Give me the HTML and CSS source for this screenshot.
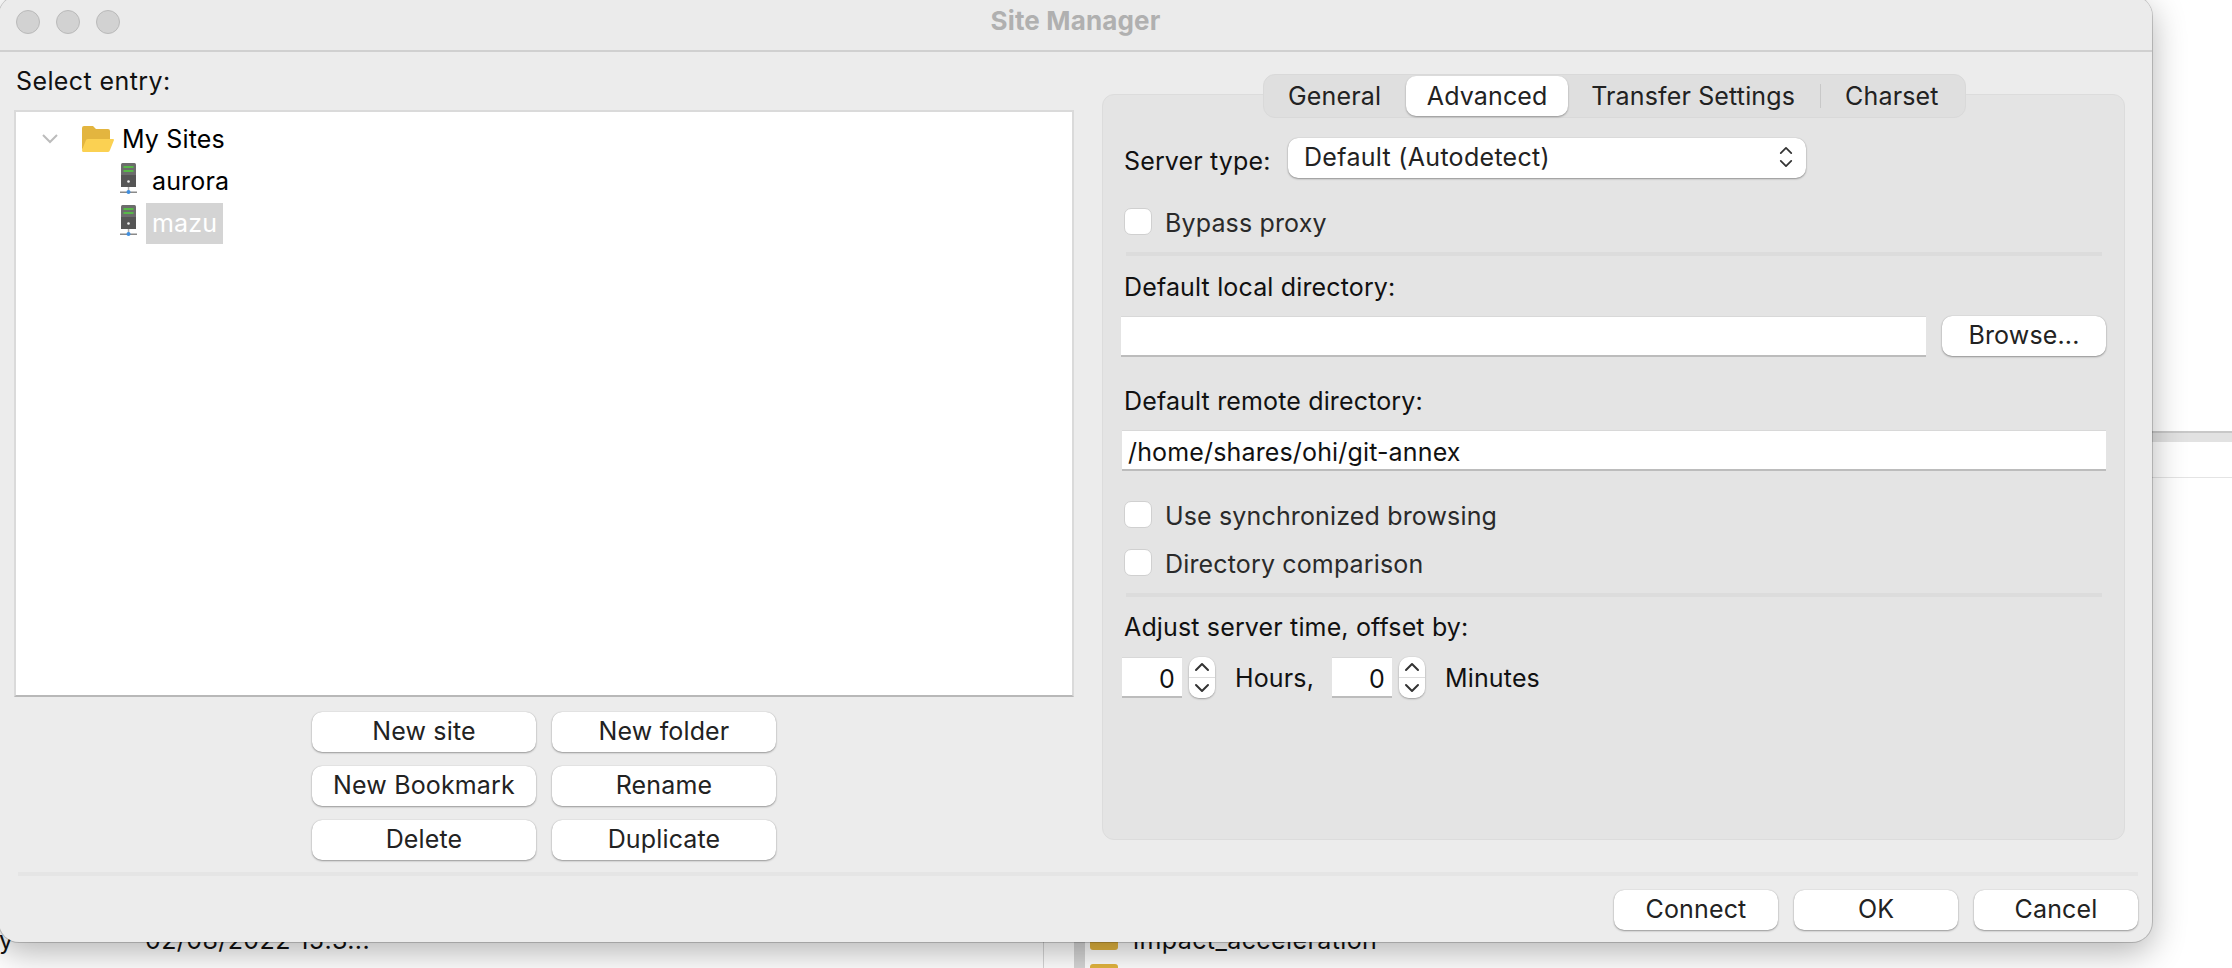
FILE: index.html
```html
<!DOCTYPE html>
<html lang="en">
<head>
    <meta charset="UTF-8">
    <meta name="viewport" content="width=device-width, initial-scale=1.0">
    <title>Site Manager</title>
    <link rel="stylesheet" href="styles.css">
</head>
<body>
    <svg class="defs" width="0" height="0">
        <symbol id="server" viewBox="0 0 18 36">
            <rect x="1" y="0" width="15" height="24" rx="1.5" fill="#6c6c6c"/>
            <rect x="1" y="12" width="15" height="12" fill="#555"/>
            <rect x="3.5" y="3" width="10" height="2" fill="#57b848"/>
            <rect x="3.5" y="7" width="10" height="2" fill="#57b848"/>
            <circle cx="8.5" cy="18.500" r="1.300" fill="#f2f2f2"/>
            <rect x="7.800" y="24" width="1.500" height="5" fill="#aaa"/>
            <rect x="0" y="28.500" width="17" height="1.500" fill="#8a8a8a"/>
            <circle cx="8.500" cy="29" r="2" fill="#3f8fe0"/>
        </symbol>
        <symbol id="up" viewBox="0 0 16 10">
            <path d="M2 8 L8 2 L14 8" fill="none" stroke="#333" stroke-width="2" stroke-linecap="round" stroke-linejoin="round"/>
        </symbol>
        <symbol id="down" viewBox="0 0 16 10">
            <path d="M2 2 L8 8 L14 2" fill="none" stroke="#333" stroke-width="2" stroke-linecap="round" stroke-linejoin="round"/>
        </symbol>
    </svg>

    <!-- the file manager window behind the dialog -->
    <div class="behind">
        <div class="behind-band"></div>
        <div class="behind-line"></div>
        <span class="behind-text behind-type">y</span>
        <span class="behind-text behind-date">02/08/2022 15:3...</span>
        <div class="behind-rule behind-rule-a"></div>
        <div class="behind-rule behind-rule-b"></div>
        <div class="behind-folder behind-folder-a"></div>
        <div class="behind-folder behind-folder-b"></div>
        <span class="behind-text behind-name">impact_acceleration</span>
    </div>

    <div class="window">
        <div class="titlebar">
            <div class="lights">
                <span class="light"></span>
                <span class="light"></span>
                <span class="light"></span>
            </div>
            <div class="title">Site Manager</div>
        </div>

        <div class="main">
            <div class="sites">
                <div class="label sites-label">Select entry:</div>
                <div class="tree">
                    <div class="tree-row tree-root">
                        <svg class="chevron" viewBox="0 0 16 10" width="16" height="10">
                            <path d="M1 1 L8 8 L15 1" fill="none" stroke="#bcbcbc" stroke-width="2"/>
                        </svg>
                        <svg class="folder" viewBox="0 0 32 26" width="32" height="26">
                            <path d="M0 2 Q0 0 2 0 H11 L14 3 H26 Q28 3 28 5 V24 H2 Q0 24 0 22 Z" fill="#e3b53f"/>
                            <path d="M1 26 Q0 26 0 24 L4 14 Q4.500 13 6 13 H31 Q32 13 32 14 L28 24 Q27.500 26 26 26 Z" fill="#fbd152"/>
                        </svg>
                        <span class="tree-text">My Sites</span>
                    </div>
                    <div class="tree-row tree-site">
                        <svg class="server"><use href="#server"/></svg>
                        <span class="tree-text">aurora</span>
                    </div>
                    <div class="tree-row tree-site">
                        <svg class="server"><use href="#server"/></svg>
                        <span class="tree-text is-selected">mazu</span>
                    </div>
                </div>
                <div class="site-buttons">
                    <button class="btn">New site</button>
                    <button class="btn">New folder</button>
                    <button class="btn">New Bookmark</button>
                    <button class="btn">Rename</button>
                    <button class="btn">Delete</button>
                    <button class="btn">Duplicate</button>
                </div>
            </div>

            <div class="settings">
                <div class="tabs">
                    <span class="tab tab-general">General</span>
                    <span class="tab tab-active">Advanced</span>
                    <span class="tab tab-transfer">Transfer Settings</span>
                    <span class="tab-sep"></span>
                    <span class="tab tab-charset">Charset</span>
                </div>

                <div class="server-row">
                    <span class="label server-label">Server type:</span>
                    <div class="select">
                        <span>Default (Autodetect)</span>
                        <span class="select-arrows">
                            <svg width="14" height="9"><use href="#up"/></svg>
                            <svg width="14" height="9"><use href="#down"/></svg>
                        </span>
                    </div>
                </div>

                <label class="check check-bypass"><input type="checkbox"><span>Bypass proxy</span></label>
                <div class="sep"></div>

                <div class="label field-label">Default local directory:</div>
                <div class="input-row">
                    <input class="input input-local" type="text" value="">
                    <button class="btn btn-browse">Browse...</button>
                </div>

                <div class="label field-label field-remote">Default remote directory:</div>
                <input class="input input-remote" type="text" value="/home/shares/ohi/git-annex">

                <label class="check check-sync"><input type="checkbox"><span>Use synchronized browsing</span></label>
                <label class="check check-compare"><input type="checkbox"><span>Directory comparison</span></label>
                <div class="sep"></div>

                <div class="label field-label field-time">Adjust server time, offset by:</div>
                <div class="time-row">
                    <input class="input input-num" type="text" value="0">
                    <div class="spin">
                        <svg width="16" height="10"><use href="#up"/></svg>
                        <svg width="16" height="10"><use href="#down"/></svg>
                    </div>
                    <span class="label time-hours">Hours,</span>
                    <input class="input input-num" type="text" value="0">
                    <div class="spin">
                        <svg width="16" height="10"><use href="#up"/></svg>
                        <svg width="16" height="10"><use href="#down"/></svg>
                    </div>
                    <span class="label time-minutes">Minutes</span>
                </div>
            </div>
        </div>

        <div class="footer">
            <div class="footer-sep"></div>
            <div class="footer-buttons">
                <button class="btn">Connect</button>
                <button class="btn">OK</button>
                <button class="btn">Cancel</button>
            </div>
        </div>
    </div>
</body>
</html>
```

FILE: styles.css
```css
* {
    box-sizing: border-box;
}

html, body {
    height: 100%;
}

body {
    margin: 0;
    background-color: #fff;
    font-family: 'Inter', 'Liberation Sans', sans-serif;
    font-size: 25px;
    letter-spacing: 0.15px;
    line-height: 30px;
    color: #111;
    overflow: hidden;
}

.defs {
    position: absolute;
}

/* window behind */
.behind-band {
    position: absolute;
    left: 2100px;
    right: 0;
    top: 431px;
    height: 11px;
    background-color: #e2e2e2;
    border-top: 2px solid #c8c8c8;
}

.behind-line {
    position: absolute;
    left: 2100px;
    right: 0;
    top: 477px;
    height: 1px;
    background-color: #e4e4e4;
}

.behind-text {
    position: absolute;
    top: 925px;
    color: #111;
    letter-spacing: 0.4px;
    white-space: nowrap;
}

.behind-type {
    left: -1px;
}

.behind-date {
    left: 145px;
}

.behind-name {
    left: 1133px;
}

.behind-rule {
    position: absolute;
    top: 930px;
    bottom: 0;
    background-color: #d6d6d6;
}

.behind-rule-a {
    left: 1043px;
    width: 1px;
}

.behind-rule-b {
    left: 1074px;
    width: 11px;
}

.behind-folder {
    position: absolute;
    left: 1090px;
    width: 28px;
    height: 20px;
    background-color: #e3b53f;
    border-radius: 3px;
}

.behind-folder-a {
    top: 930px;
}

.behind-folder-b {
    top: 964px;
}

/* dialog */
.window {
    position: absolute;
    left: -1px;
    top: -4px;
    width: 2153px;
    height: 946px;
    background-color: #ececec;
    border-radius: 20px;
    box-shadow: 0 0 0 1px rgba(0, 0, 0, 0.18), 0 10px 34px rgba(0, 0, 0, 0.3);
}

.titlebar {
    position: relative;
    height: 56px;
    display: flex;
    align-items: center;
    justify-content: center;
    padding-top: 4px;
    background-color: #ebebeb;
    border-bottom: 2px solid #d0d0d0;
    border-radius: 20px 20px 0 0;
}

.lights {
    position: absolute;
    left: 17px;
    top: 14px;
    display: flex;
    gap: 16px;
}

.light {
    width: 24px;
    height: 24px;
    border-radius: 50%;
    background-color: #d2d2d2;
    border: 1px solid #bababa;
}

.title {
    font-size: 26px;
    font-weight: 700;
    color: #b0b0b0;
    margin-top: -8px;
}

.main {
    display: flex;
    gap: 28px;
    padding-left: 15px;
}

.label {
    color: #111;
}

/* left column */
.sites {
    width: 1060px;
    padding-top: 14px;
}

.sites-label {
    margin-left: 2px;
    margin-bottom: 14px;
    letter-spacing: 0.4px;
}

.tree {
    height: 587px;
    padding-top: 6px;
    background-color: #fff;
    border: 2px solid #dadada;
    border-bottom-color: #b8b8b8;
}

.tree-row {
    display: flex;
    align-items: center;
    height: 42px;
    color: #000;
}

.tree-root {
    padding-left: 26px;
}

.tree-site {
    padding-left: 104px;
}

.chevron {
    margin-right: 24px;
}

.folder {
    margin-right: 2px;
}

.server {
    width: 18px;
    height: 36px;
    margin-right: 8px;
}

.tree-text {
    padding: 0 6px;
    line-height: 41px;
}

.is-selected {
    background-color: #d4d4d4;
    color: #fff;
}

.site-buttons {
    display: grid;
    grid-template-columns: 224px 224px;
    justify-content: center;
    gap: 14px 16px;
    margin-top: 15px;
}

.btn {
    height: 40px;
    padding: 0 0 2px;
    border: none;
    border-radius: 10px;
    background-color: #fff;
    font: inherit;
    letter-spacing: inherit;
    color: #222;
    box-shadow: 0 1px 2px rgba(0, 0, 0, 0.35), 0 0 1px rgba(0, 0, 0, 0.25);
}

/* right column */
.settings {
    position: relative;
    width: 1023px;
    height: 746px;
    margin-top: 42px;
    padding: 0 22px 0 21px;
    background-color: #e4e4e4;
    border: 1px solid #dcdcdc;
    border-radius: 12px;
}

.tabs {
    display: flex;
    align-items: center;
    width: 703px;
    height: 44px;
    margin: -21px 0 0 139px;
    background-color: #dfdfdf;
    border: 1px solid #d9d9d9;
    border-radius: 12px;
    padding: 1px;
    color: #222;
}

.tab {
    white-space: nowrap;
    padding-bottom: 1px;
}

.tab-general {
    margin-left: 23px;
}

.tab-active {
    display: flex;
    align-items: center;
    justify-content: center;
    width: 162px;
    height: 40px;
    margin-left: 25px;
    background-color: #fff;
    border-radius: 10px;
    box-shadow: 0 1px 2px rgba(0, 0, 0, 0.35);
}

.tab-transfer {
    margin-left: 23px;
}

.tab-sep {
    width: 1px;
    height: 24px;
    margin-left: 25px;
    background-color: #c8c8c8;
}

.tab-charset {
    margin-left: 24px;
}

.server-row {
    display: flex;
    align-items: center;
    height: 40px;
    margin-top: 20px;
}

.server-label {
    width: 164px;
    margin-top: 6px;
}

.select {
    display: flex;
    align-items: center;
    justify-content: space-between;
    width: 518px;
    height: 40px;
    padding: 0 13px 2px 16px;
    background-color: #fff;
    border-radius: 10px;
    color: #222;
    letter-spacing: 0.3px;
    box-shadow: 0 1px 2px rgba(0, 0, 0, 0.35), 0 0 1px rgba(0, 0, 0, 0.25);
}

.select-arrows {
    display: flex;
    flex-direction: column;
    gap: 4px;
}

.check {
    display: flex;
    align-items: center;
    gap: 13px;
    height: 27px;
    color: #2a2a2a;
}

.check span {
    padding-top: 3px;
}

.check input {
    appearance: none;
    width: 28px;
    height: 27px;
    margin: 0;
    background-color: #fff;
    border: 1px solid #d0d0d0;
    border-radius: 7px;
}

.check-bypass {
    margin-top: 30px;
}

.check-sync {
    margin-top: 30px;
}

.check-compare {
    margin-top: 21px;
}

.sep {
    height: 4px;
    margin: 17px 0 0 2px;
    background-color: #dcdcdc;
}

.field-label {
    margin-top: 16px;
}

.field-remote {
    margin-top: 29px;
}

.field-time {
    margin: 15px 0 15px;
}

.input-row {
    display: flex;
    gap: 16px;
    margin: 14px 0 0 -3px;
    width: 985px;
}

.input {
    height: 41px;
    padding: 4px 6px 0;
    background-color: #fff;
    border: none;
    border-top: 1px solid #d8d8d8;
    border-bottom: 2px solid #bcbcbc;
    border-radius: 0;
    font: inherit;
    letter-spacing: inherit;
    color: #111;
    outline: none;
}

.input-local {
    width: 805px;
}

.btn-browse {
    width: 164px;
}

.input-remote {
    display: block;
    width: 984px;
    margin: 14px 0 0 -2px;
}

.time-row {
    display: flex;
    align-items: center;
    margin: 0 0 0 -2px;
}

.input-num {
    width: 60px;
    padding-right: 7px;
    text-align: right;
}

.spin {
    display: flex;
    flex-direction: column;
    align-items: center;
    justify-content: space-around;
    width: 26px;
    height: 41px;
    margin-left: 7px;
    background: linear-gradient(#fff 0 48%, #ddd 48% 52%, #fff 52%);
    border-radius: 10px;
    box-shadow: 0 1px 2px rgba(0, 0, 0, 0.3), 0 0 1px rgba(0, 0, 0, 0.2);
}

.time-hours {
    margin: 0 19px 0 20px;
    width: 78px;
}

.time-minutes {
    margin-left: 20px;
}

/* bottom buttons */
.footer {
    padding: 12px 14px 0 19px;
}

.footer-sep {
    height: 4px;
    background-color: #e5e5e5;
}

.footer-buttons {
    display: flex;
    justify-content: flex-end;
    gap: 16px;
    margin-top: 14px;
}

.footer-buttons .btn {
    width: 164px;
}
```
